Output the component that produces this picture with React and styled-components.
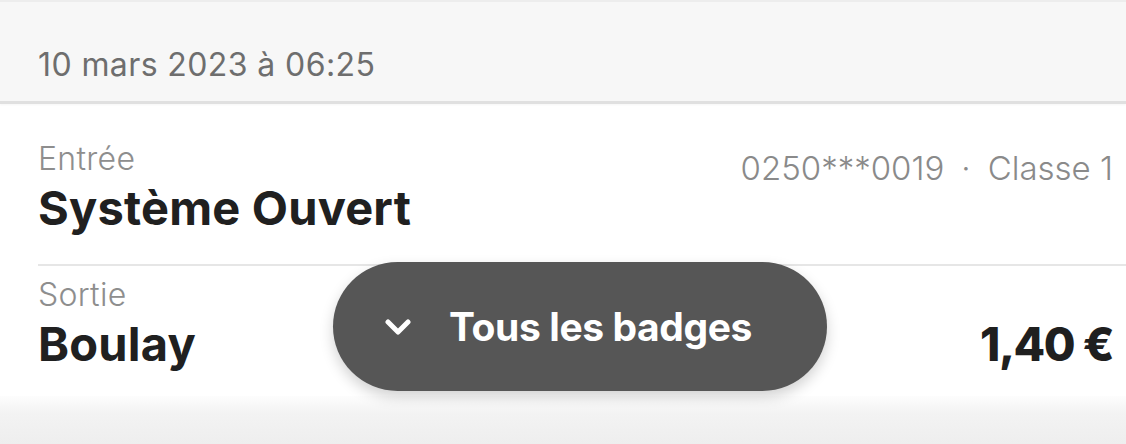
import React from "react";
import styled, { createGlobalStyle } from "styled-components";

const Global = createGlobalStyle`
  html, body { margin: 0; padding: 0; background: #ffffff; }
  body { font-family: Inter, "Noto Sans", sans-serif; -webkit-font-smoothing: antialiased; }
`;

const Page = styled.div`
  position: relative;
  width: 1126px;
  height: 444px;
  overflow: hidden;
  background: #ffffff;
  display: flex;
  flex-direction: column;
`;

const DateHeader = styled.header`
  height: 104px;
  flex-shrink: 0;
  box-sizing: border-box;
  background: #f7f7f7;
  border-top: 2px solid #ededed;
  border-bottom: 3px solid #e0e0e0;
  box-shadow: 0 1px 2px rgba(0, 0, 0, 0.04);
  padding: 45px 0 0 38px;
  font-size: 32px;
  line-height: 36px;
  color: #6e6e6e;
  letter-spacing: 0.4px;
`;

const Row = styled.section`
  display: flex;
  justify-content: space-between;
  align-items: ${(p) => (p.$alignEnd ? "flex-end" : "flex-start")};
  padding: ${(p) => p.$pad};
  margin-left: 38px;
  border-bottom: ${(p) => (p.$divider ? "2px solid #e6e6e6" : "none")};
`;

const Place = styled.div`
  display: flex;
  flex-direction: column;
`;

const Label = styled.span`
  font-size: 32px;
  font-weight: 300;
  line-height: 36px;
  color: #8e8e8e;
  letter-spacing: 0.3px;
`;

const Name = styled.span`
  margin-top: 5px;
  font-size: 47px;
  font-weight: 700;
  line-height: 52px;
  color: #202020;
  letter-spacing: 0.2px;
`;

const Meta = styled.span`
  margin-top: 9px;
  font-size: 33px;
  font-weight: 300;
  line-height: 36px;
  color: #8a8a8a;
  white-space: nowrap;
`;

const Dot = styled.span`
  margin: 0 17px;
`;

const Price = styled.span`
  font-size: 46px;
  font-weight: 800;
  line-height: 52px;
  color: #1f1f1f;
  letter-spacing: -1.5px;
`;

const BottomBand = styled.div`
  flex: 1;
  margin-top: 26px;
  background: linear-gradient(#fdfdfd, #f3f3f3 35%, #eeeeee);
`;

const FloatingButton = styled.button`
  position: absolute;
  left: 333px;
  top: 262px;
  width: 494px;
  height: 129px;
  border: none;
  border-radius: 65px;
  background: #565656;
  box-shadow: 0 6px 14px rgba(0, 0, 0, 0.18);
  color: #ffffff;
  display: flex;
  align-items: center;
  padding: 0 0 0 52px;
  gap: 38px;
  font-family: Inter, Roboto, sans-serif;
  font-size: 39px;
  font-weight: 700;
  letter-spacing: -0.4px;
  cursor: pointer;
`;

const Chevron = () => (
  <svg width="26" height="16" viewBox="0 0 26 16" fill="none">
    <path d="M3 3l10 10 10-10" stroke="#ffffff" strokeWidth="5" strokeLinecap="round" strokeLinejoin="round" />
  </svg>
);

export default function App() {
  return (
    <>
      <Global />
      <Page>
        <DateHeader>10 mars 2023 à 06:25</DateHeader>
        <Row $pad="37px 13px 30px 0" $divider>
          <Place>
            <Label>Entrée</Label>
            <Name>Système Ouvert</Name>
          </Place>
          <Meta>
            0250***0019<Dot>·</Dot>Classe 1
          </Meta>
        </Row>
        <Row $pad="11px 13px 0 0" $alignEnd>
          <Place>
            <Label>Sortie</Label>
            <Name>Boulay</Name>
          </Place>
          <Price>1,40 €</Price>
        </Row>
        <BottomBand />
        <FloatingButton>
          <Chevron />
          Tous les badges
        </FloatingButton>
      </Page>
    </>
  );
}
